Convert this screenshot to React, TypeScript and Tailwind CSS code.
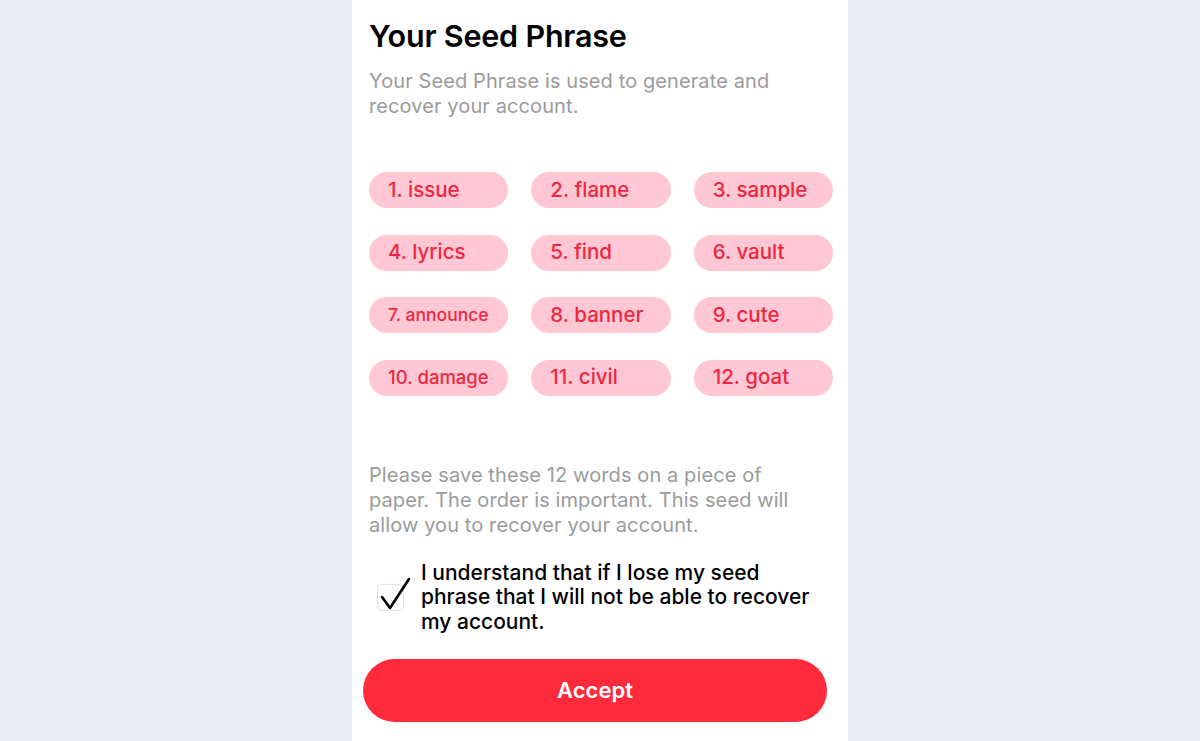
import React from 'react';

const words = [
  'issue', 'flame', 'sample',
  'lyrics', 'find', 'vault',
  'announce', 'banner', 'cute',
  'damage', 'civil', 'goat',
];

function sizeFor(w: string) {
  if (w === 'announce') return 'text-[17.5px]';
  if (w === 'damage') return 'text-[18.5px]';
  return 'text-[20.5px]';
}

export default function App() {
  return (
    <div
      className="min-h-screen h-[741px] overflow-hidden bg-[#e9eef8]"
      style={{ fontFamily: 'Inter, "Noto Sans", sans-serif' }}
    >
      <div className="mx-auto w-[496px] h-full bg-white pl-[17px] pr-[15px] flex flex-col">
        {/* Header */}
        <h1 className="pt-[18px] text-[30.5px] leading-[36px] font-semibold text-black tracking-[-0.2px]">
          Your Seed Phrase
        </h1>
        <p className="mt-[15px] text-[20px] leading-[25px] text-[#9b9b9b] tracking-[0.1px]">
          Your Seed Phrase is used to generate and
          <br />
          recover your account.
        </p>

        {/* Words */}
        <div className="mt-[53px] grid grid-cols-3 gap-x-[23px] gap-y-[26.5px]">
          {words.map((w, i) => (
            <div
              key={w}
              className="h-[36px] rounded-full bg-[#ffc8d4] flex items-center pl-[19px] text-[#f0263f] font-medium"
            >
              <span className={sizeFor(w)}>
                {i + 1}. {w}
              </span>
            </div>
          ))}
        </div>

        {/* Notice */}
        <p className="mt-[67px] text-[20px] leading-[25px] text-[#9b9b9b] tracking-[0.1px]">
          Please save these 12 words on a piece of
          <br />
          paper. The order is important. This seed will
          <br />
          allow you to recover your account.
        </p>

        <label className="mt-[23px] flex items-center">
          <span className="relative ml-[8px] w-[27px] h-[27px] rounded-[5px] border border-[#dfe1ef] shrink-0">
            <svg
              viewBox="0 0 32 34"
              className="absolute left-[1px] -top-[8px] w-[32px] h-[34px]"
              fill="none"
              stroke="#000"
              strokeWidth="2.6"
              strokeLinecap="round"
              strokeLinejoin="round"
            >
              <path d="M3 20 L11 31 L30 2" />
            </svg>
          </span>
          <span className="ml-[17px] text-[21px] leading-[24.5px] font-medium text-black">
            I understand that if I lose my seed
            <br />
            phrase that I will not be able to recover
            <br />
            my account.
          </span>
        </label>

        <button className="mt-[25px] -ml-[6px] w-[464px] h-[63px] rounded-full bg-[#ff2a3b] text-white text-[22px] font-semibold">
          Accept
        </button>
      </div>
    </div>
  );
}
